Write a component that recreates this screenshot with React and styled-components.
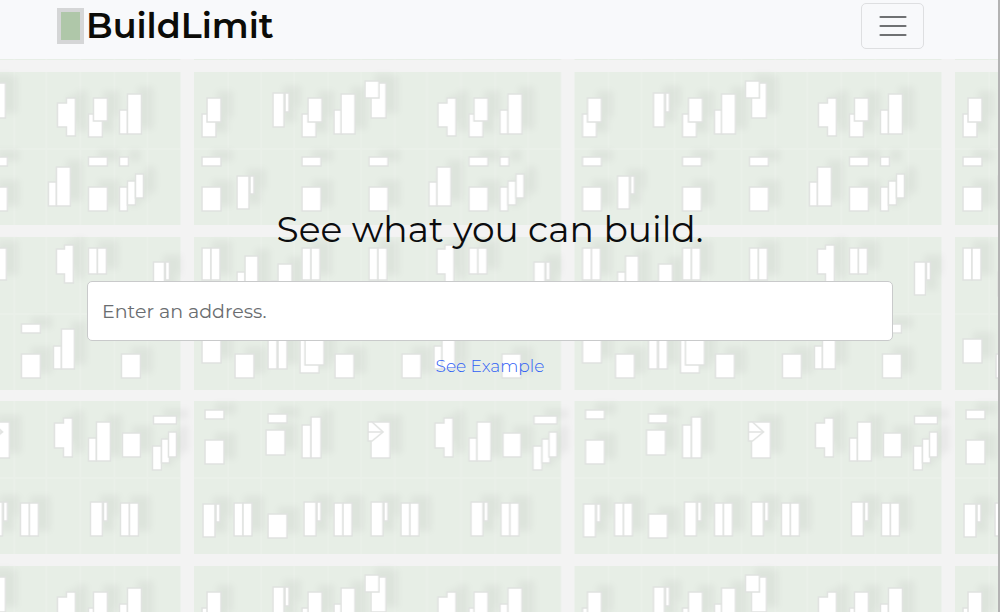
import React from "react";
import styled, { createGlobalStyle } from "styled-components";

const GlobalStyle = createGlobalStyle`
  * {
    box-sizing: border-box;
  }
  body {
    margin: 0;
    background-color: #f3f3f3;
    color: #0b0c0e;
    font-family: Montserrat, Inter, "Open Sans", sans-serif;
  }
`;
const Page = styled.div`
  position: relative;
  min-height: 100vh;
  border-right: 2px solid #b3b3b3;
`;
const MapSvg = styled.svg`
  position: absolute;
  inset: 0;
  z-index: -1;
  width: 100%;
  height: 100%;
`;
const Navbar = styled.header`
  display: flex;
  align-items: flex-start;
  justify-content: space-between;
  height: 59px;
  padding: 3px 74px 0 57px;
  background-color: #f8f9fb;
`;
const Brand = styled.a`
  display: flex;
  align-items: center;
  gap: 2px;
  height: 46px;
  color: #0c0c08;
  font-size: 35px;
  font-weight: 600;
  line-height: 46px;
  text-decoration: none;
`;
const BrandMark = styled.span`
  width: 27px;
  height: 36px;
  border: 4px solid #d5d6d7;
  background-color: #afc7a9;
`;
const Toggler = styled.button`
  display: flex;
  align-items: center;
  justify-content: center;
  width: 63px;
  height: 46px;
  padding: 0;
  border: 1px solid #dedfe1;
  border-radius: 5px;
  background-color: transparent;
  cursor: pointer;
`;
const Hero = styled.main`
  display: flex;
  flex-direction: column;
  align-items: center;
  padding: 146px 105px 0 87px;
`;
const Title = styled.h1`
  margin: 0 0 28px;
  font-size: 36px;
  font-weight: 400;
  line-height: 48px;
`;
const AddressInput = styled.input`
  width: 100%;
  height: 60px;
  padding: 0 14px;
  border: 1px solid #c9cacb;
  border-radius: 5px;
  background-color: white;
  color: #212529;
  font-family: inherit;
  font-size: 19px;
  outline: none;
  &::placeholder {
    color: #6a6d70;
    opacity: 1;
  }
`;
const ExampleLink = styled.a`
  margin-top: 13px;
  color: #2f5ff5;
  font-size: 17px;
  font-weight: 300;
  line-height: 24px;
  text-decoration: none;
`;

// [x, y, width, height] of every building in one map tile
const buildings = [
  // first block
  [202, 114, 14, 23], [207, 98, 14, 24],
  [273, 93, 11, 34], [285, 93, 4, 19],
  [302, 114, 14, 23], [308, 98, 14, 24],
  [334, 110, 8, 24], [341, 94, 14, 40],
  [371, 83, 15, 35], [365, 81, 14, 17],
  [469, 114, 14, 23], [474, 98, 14, 23],
  [500, 110, 8, 24], [508, 94, 14, 40],
  [202, 157, 19, 9], [302, 157, 19, 9], [369, 157, 19, 9],
  [469, 157, 19, 9], [500, 157, 9, 9],
  [202, 187, 19, 24], [302, 187, 19, 24], [369, 187, 19, 24], [469, 187, 19, 24],
  [237, 176, 12, 33], [250, 176, 4, 18],
  [429, 182, 8, 24], [437, 167, 14, 39],
  [500, 187, 8, 24], [508, 181, 8, 24], [516, 174, 8, 24],
  // second block
  [202, 248, 9, 32], [211, 248, 9, 32],
  [237, 272, 8, 24], [245, 256, 13, 40],
  [271, 281, 8, 24], [278, 264, 14, 40],
  [302, 248, 9, 32], [311, 248, 9, 32],
  [369, 248, 9, 32], [378, 248, 9, 32],
  [469, 248, 9, 26], [478, 248, 9, 26],
  [534, 262, 11, 33], [546, 262, 4, 18],
  [202, 339, 19, 24], [235, 354, 19, 24],
  [268, 330, 9, 39], [278, 330, 9, 39],
  [300, 340, 19, 33], [305, 330, 19, 35],
  [335, 354, 19, 24],
  [402, 354, 19, 24], [402, 324, 19, 9],
  [434, 346, 8, 23], [442, 329, 13, 40],
  [502, 354, 19, 24], [502, 324, 19, 9],
  // third block
  [205, 410, 19, 9], [205, 440, 19, 24],
  [268, 414, 19, 9], [266, 430, 19, 25],
  [302, 425, 9, 33], [311, 417, 10, 41],
  [371, 422, 19, 36],
  [469, 438, 8, 23], [477, 422, 14, 39],
  [503, 433, 18, 24], [534, 416, 23, 8],
  [533, 446, 9, 24], [542, 439, 8, 24], [549, 432, 8, 25],
  [203, 504, 12, 33], [216, 504, 4, 18],
  [234, 503, 9, 33], [243, 503, 9, 33],
  [268, 514, 19, 24],
  [304, 502, 12, 34], [317, 502, 4, 19],
  [334, 503, 9, 33], [343, 503, 9, 33],
  [371, 502, 12, 34], [384, 502, 4, 19],
  [401, 503, 9, 33], [410, 503, 9, 33],
  [471, 502, 12, 34], [484, 502, 4, 19],
  [501, 503, 9, 33], [510, 503, 9, 33],
];
const blocks = [72, 237, 401];
const lotLines = [228, 261, 294, 328, 361, 395, 427, 461, 495, 528];

const CityMap = () => {
  return (
    <MapSvg aria-hidden="true">
      <defs>
        <filter
          id="shade"
          filterUnits="userSpaceOnUse"
          x="190"
          y="60"
          width="390"
          height="494"
          colorInterpolationFilters="sRGB"
        >
          <feDropShadow
            dx="11"
            dy="-6"
            stdDeviation="3"
            floodColor="#000"
            floodOpacity="0.045"
          />
        </filter>
        <pattern
          id="city"
          x="194"
          y="60"
          width="380.5"
          height="494"
          patternUnits="userSpaceOnUse"
        >
          <g transform="translate(-194 -60)">
            {blocks.map((y) => (
              <g key={y}>
                <rect x="194" y={y} width="367" height="153" fill="#e7eee6" />
                <path
                  d={`M194 ${y + 77}H561`}
                  stroke="#eaf0e9"
                  strokeWidth="2"
                />
                {lotLines.map((x) => (
                  <path
                    key={x}
                    d={`M${x} ${y}v153`}
                    stroke="#eaf0e9"
                    strokeWidth="2"
                  />
                ))}
              </g>
            ))}
            <g
              fill="#fff"
              stroke="#e0e2e0"
              strokeWidth="1.5"
              filter="url(#shade)"
            >
              {buildings.map(([x, y, width, height]) => (
                <rect
                  key={`${x}-${y}`}
                  x={x}
                  y={y}
                  width={width}
                  height={height}
                />
              ))}
              <path d="M438 103h9v-5h9v38h-9v-9h-9z" />
              <path d="M437 249h8v-4h9v38h-9v-9h-8z" />
              <path d="M435 423h9v-5h9v39h-9v-9h-9z" />
              <path d="M368 422h4l11 10l-11 9h-4z" />
              <path d="M368 432h15" />
            </g>
          </g>
        </pattern>
      </defs>
      <rect width="100%" height="100%" fill="url(#city)" />
    </MapSvg>
  );
};

const App = () => {
  return (
    <>
      <GlobalStyle />
      <Page>
        <CityMap />
        <Navbar>
          <Brand href="#">
            <BrandMark />
            BuildLimit
          </Brand>
          <Toggler type="button" aria-label="Toggle navigation">
            <svg width="28" height="22" viewBox="0 0 28 22" aria-hidden="true">
              <path
                d="M1.5 2h25M1.5 11h25M1.5 20h25"
                stroke="#6f7173"
                strokeWidth="2.2"
                strokeLinecap="round"
              />
            </svg>
          </Toggler>
        </Navbar>
        <Hero>
          <Title>See what you can build.</Title>
          <AddressInput
            type="text"
            aria-label="Enter an address."
            placeholder="Enter an address."
          />
          <ExampleLink href="#example">See Example</ExampleLink>
        </Hero>
      </Page>
    </>
  );
};

export default App;
